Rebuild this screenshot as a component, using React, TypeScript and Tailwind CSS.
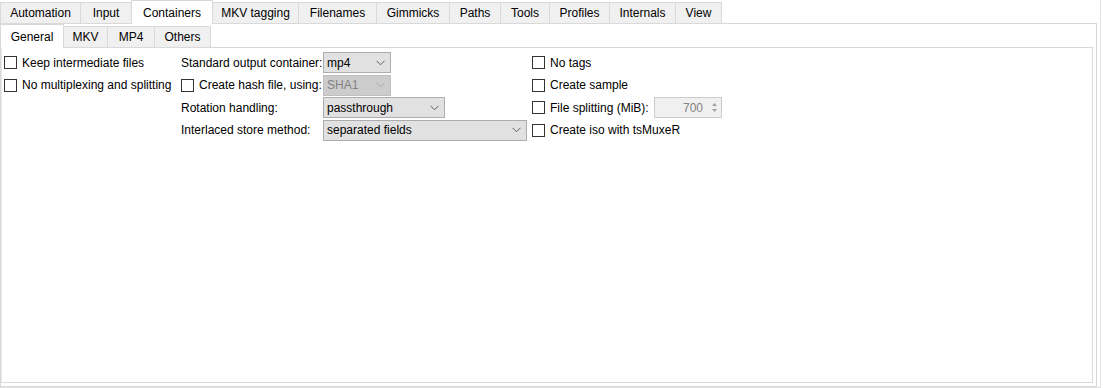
import React from "react";

const mainTabs: { label: string; w: number }[] = [
  { label: "Automation", w: 81 },
  { label: "Input", w: 52 },
  { label: "Containers", w: 82 },
  { label: "MKV tagging", w: 87 },
  { label: "Filenames", w: 79 },
  { label: "Gimmicks", w: 74 },
  { label: "Paths", w: 52 },
  { label: "Tools", w: 50 },
  { label: "Profiles", w: 61 },
  { label: "Internals", w: 67 },
  { label: "View", w: 47 },
];

const subTabs: { label: string; w: number }[] = [
  { label: "General", w: 63 },
  { label: "MKV", w: 45 },
  { label: "MP4", w: 48 },
  { label: "Others", w: 57 },
];

function Chevron({ color }: { color: string }) {
  return (
    <svg width="9" height="6" viewBox="0 0 9 6" className="shrink-0">
      <path d="M0.5 0.8 L4.5 4.8 L8.5 0.8" fill="none" stroke={color} strokeWidth="1" />
    </svg>
  );
}

function Check({ label }: { label: string }) {
  return (
    <div className="flex items-center h-full">
      <div className="w-[13px] h-[13px] border border-[#333333] bg-white shrink-0" />
      <span className="ml-[5px] whitespace-nowrap">{label}</span>
    </div>
  );
}

function Combo({ value, w, disabled }: { value: string; w: number; disabled?: boolean }) {
  return (
    <div
      className={
        disabled
          ? "flex items-center justify-between h-[21px] border border-[#bfbfbf] bg-[#cccccc] text-[#838383] pl-[3px] pr-[5px]"
          : "flex items-center justify-between h-[21px] border border-[#adadad] bg-[#e1e1e1] text-black pl-[3px] pr-[5px]"
      }
      style={{ width: w }}
    >
      <span className="whitespace-nowrap">{value}</span>
      <Chevron color={disabled ? "#a6a6a6" : "#606060"} />
    </div>
  );
}

function Spin() {
  return (
    <div className="flex h-[21px] w-[68px] border border-[#cccccc] bg-[#f0f0f0] text-[#838383]">
      <div className="flex-1 flex items-center justify-end pr-[4px]">700</div>
      <div className="w-[14px] flex flex-col items-center justify-center gap-[3px]">
        <svg width="5" height="3" viewBox="0 0 5 3">
          <path d="M0 3 L2.5 0 L5 3 Z" fill="#a0a0a0" />
        </svg>
        <svg width="5" height="3" viewBox="0 0 5 3">
          <path d="M0 0 L2.5 3 L5 0 Z" fill="#a0a0a0" />
        </svg>
      </div>
    </div>
  );
}

export default function App() {
  return (
    <div
      className="w-[1103px] h-[388px] bg-white text-[12px] text-black overflow-hidden"
      style={{ fontFamily: '"Liberation Sans", Arial, sans-serif' }}
    >
      <div className="w-[1101px] h-[388px] border-r border-b border-[#e3e3e3] bg-white">
        {/* main tabs */}
        <div className="flex items-end h-[23px] relative z-10">
          {mainTabs.map((t, i) =>
            t.label === "Containers" ? (
              <div
                key={t.label}
                className="h-[24px] -mb-px bg-white border border-b-0 border-[#d9d9d9] flex items-center justify-center whitespace-nowrap -ml-px"
                style={{ width: t.w }}
              >
                {t.label}
              </div>
            ) : (
              <div
                key={t.label}
                className={
                  "h-[21px] bg-[#f0f0f0] border border-b-0 border-[#d9d9d9] flex items-center justify-center whitespace-nowrap" +
                  (i > 0 ? " -ml-px" : "")
                }
                style={{ width: t.w }}
              >
                {t.label}
              </div>
            )
          )}
        </div>
        {/* outer pane */}
        <div className="w-[1097px] h-[364px] border border-[#d9d9d9] bg-white">
          <div className="flex items-end h-[23px] relative z-10">
            {subTabs.map((t, i) =>
              t.label === "General" ? (
                <div
                  key={t.label}
                  className="h-[24px] -mb-px bg-white border border-b-0 border-l-0 border-[#d9d9d9] flex items-center justify-center whitespace-nowrap"
                  style={{ width: t.w }}
                >
                  {t.label}
                </div>
              ) : (
                <div
                  key={t.label}
                  className={
                    "h-[21px] bg-[#f0f0f0] border border-b-0 border-[#d9d9d9] flex items-center justify-center whitespace-nowrap" +
                    (i > 0 ? " -ml-px" : "")
                  }
                  style={{ width: t.w }}
                >
                  {t.label}
                </div>
              )
            )}
          </div>
          {/* inner pane */}
          <div className="w-[1092px] h-[336px] border border-[#d9d9d9] border-l-[#e8e8e8] bg-white pt-[4px]">
            <div className="grid grid-cols-[176px_145px_207px_auto] grid-rows-[21px_22px_21px_22px] gap-y-px">
              {/* row 1 */}
              <div className="pl-[2px]">
                <Check label="Keep intermediate files" />
              </div>
              <div className="flex items-center pl-[3px] whitespace-nowrap">Standard output container:</div>
              <div className="flex items-center">
                <Combo value="mp4" w={68} />
              </div>
              <div className="pl-[2px]">
                <Check label="No tags" />
              </div>
              {/* row 2 */}
              <div className="pl-[2px]">
                <Check label="No multiplexing and splitting" />
              </div>
              <div className="pl-[3px]">
                <Check label="Create hash file, using:" />
              </div>
              <div className="flex items-center">
                <Combo value="SHA1" w={68} disabled />
              </div>
              <div className="pl-[2px]">
                <Check label="Create sample" />
              </div>
              {/* row 3 */}
              <div />
              <div className="flex items-center pl-[3px] whitespace-nowrap">Rotation handling:</div>
              <div className="flex items-center">
                <Combo value="passthrough" w={122} />
              </div>
              <div className="pl-[2px] flex items-center">
                <div className="w-[122px]">
                  <Check label="File splitting (MiB):" />
                </div>
                <Spin />
              </div>
              {/* row 4 */}
              <div />
              <div className="flex items-center pl-[3px] whitespace-nowrap">Interlaced store method:</div>
              <div className="flex items-center">
                <Combo value="separated fields" w={204} />
              </div>
              <div className="pl-[2px]">
                <Check label="Create iso with tsMuxeR" />
              </div>
            </div>
          </div>
        </div>
      </div>
    </div>
  );
}
